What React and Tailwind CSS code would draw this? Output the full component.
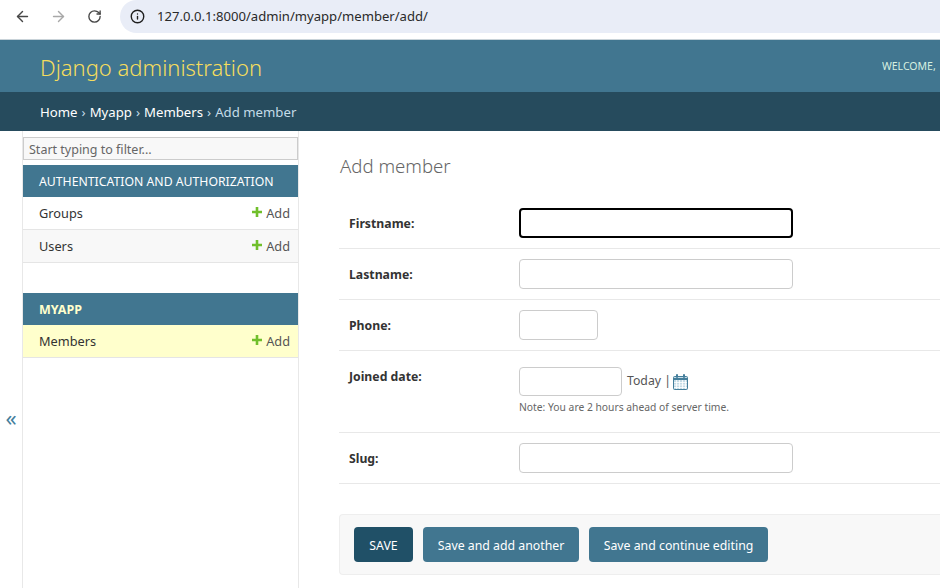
import React from "react";
import { ArrowLeft, ArrowRight, RotateCw, Info } from "lucide-react";

const font = "font-['Noto_Sans','Open_Sans',sans-serif]";

function PlusIcon() {
  return (
    <svg width="10" height="10" viewBox="0 0 10 10" className="mr-[4px] mb-[5px]">
      <path d="M3.7 0h2.6v3.7H10v2.6H6.3V10H3.7V6.3H0V3.7h3.7z" fill="#70bf2b" />
    </svg>
  );
}

function CalendarIcon() {
  return (
    <svg width="15" height="16" viewBox="0 0 15 16" fill="none">
      <rect x="0.5" y="2.5" width="14" height="13" rx="1" fill="#c5dbe6" stroke="#447e9b" />
      <path d="M0.5 5h14" stroke="#447e9b" strokeWidth="2" />
      <path d="M3.5 6v9M6.5 6v9M9.5 6v9M12.5 6v9M1 8.5h13M1 11h13M1 13.5h13" stroke="#ffffff" strokeWidth="0.8" />
      <rect x="3" y="0" width="2" height="4" rx="1" fill="#447e9b" />
      <rect x="10" y="0" width="2" height="4" rx="1" fill="#447e9b" />
    </svg>
  );
}

function SidebarRow({ name, shade }) {
  return (
    <div className={`flex h-[33px] items-center justify-between border-b border-[#e5e5e5] pt-[2px] pl-[16px] pr-[8px] text-[12.75px] text-[#333333] ${shade}`}>
      <span>{name}</span>
      <span className="flex items-center text-[#555555]">
        <PlusIcon />
        Add
      </span>
    </div>
  );
}

function FormRow({ label, children, height, inputTop = "pt-[10px]" }) {
  return (
    <div className={`flex border-b border-[#e8e8e8] pl-[10px] ${height}`}>
      <label className="w-[170px] pt-[17px] text-[12.25px] leading-[18px] font-bold text-[#333333]">{label}</label>
      <div className={inputTop}>{children}</div>
    </div>
  );
}

function TextBox({ width, height = "h-[30px]", focused }) {
  return (
    <input
      type="text"
      className={`block rounded-[4px] bg-white ${height} ${width} ${
        focused ? "border-2 border-black" : "border border-[#cccccc]"
      }`}
    />
  );
}

export default function App() {
  return (
    <div className={`flex h-[588px] w-[940px] flex-col overflow-hidden bg-white ${font}`}>
      {/* browser toolbar */}
      <div className="flex h-[40px] shrink-0 items-start border-b border-[#c9d3d9] bg-white">
        <div className="flex h-[33px] w-[120px] shrink-0 items-center pl-[14px]">
          <ArrowLeft size={17} strokeWidth={2} className="text-[#474747]" />
          <ArrowRight size={17} strokeWidth={2} className="ml-[19px] text-[#a8a8a8]" />
          <RotateCw size={15} strokeWidth={2.2} className="ml-[20px] text-[#474747]" />
        </div>
        <div className="flex h-[33px] flex-1 items-center rounded-l-full bg-[#e9edf7] pl-[10px]">
          <Info size={15} strokeWidth={2.2} className="text-[#1f1f1f]" />
          <span className="ml-[12px] text-[13.1px] text-[#2a2a2a]">127.0.0.1:8000/admin/myapp/member/add/</span>
        </div>
      </div>

      {/* django header */}
      <div className="flex h-[52px] shrink-0 items-center justify-between bg-[#417690] pt-[2px] pl-[40px]">
        <span className="text-[22px] font-light text-[#f5dd5d]">Django administration</span>
        <span className="w-[58px] overflow-hidden text-[10.5px] whitespace-nowrap text-[#d6f0e0]">WELCOME,</span>
      </div>
      <div className="flex h-[39px] shrink-0 items-center bg-[#264b5d] pt-[2px] pl-[40px] text-[13.2px] text-[#c4dce8]">
        <span className="text-white">Home</span>
        <span className="mx-[4px]">›</span>
        <span className="text-white">Myapp</span>
        <span className="mx-[4px]">›</span>
        <span className="text-white">Members</span>
        <span className="mx-[4px]">›</span>
        <span>Add member</span>
      </div>

      <div className="flex min-h-0 flex-1">
        {/* collapse toggle */}
        <div className="flex w-[23px] shrink-0 items-center justify-center border-r border-[#e8e8e8] pt-[116px] text-[22px] text-[#447e9b]">
          «
        </div>

        {/* sidebar */}
        <div className="w-[276px] shrink-0 border-r border-[#e8e8e8]">
          <div className="mt-[6px] mb-[5px] flex h-[23px] items-center border border-[#cccccc] bg-[#f8f8f8] pt-[3px] pl-[5px] text-[12.5px] text-[#666666]">
            Start typing to filter...
          </div>
          <div className="flex h-[32px] items-center bg-[#417690] pt-[2px] pl-[16px] text-[12.25px] text-white">
            AUTHENTICATION AND AUTHORIZATION
          </div>
          <SidebarRow name="Groups" shade="bg-white" />
          <SidebarRow name="Users" shade="bg-[#f8f8f8]" />
          <div className="mt-[30px] flex h-[32px] items-center bg-[#417690] pt-[2px] pl-[16px] text-[12.5px] font-bold text-[#ffffcc]">
            MYAPP
          </div>
          <SidebarRow name="Members" shade="bg-[#ffffcc]" />
        </div>

        {/* content */}
        <div className="min-w-0 flex-1 pl-[40px]">
          <h1 className="mt-[22px] mb-[19px] ml-[1px] text-[18.6px] leading-[26px] font-light text-[#666666]">Add member</h1>
          <FormRow label="Firstname:" height="h-[51px]">
            <TextBox width="w-[274px]" focused />
          </FormRow>
          <FormRow label="Lastname:" height="h-[51px]">
            <TextBox width="w-[274px]" />
          </FormRow>
          <FormRow label="Phone:" height="h-[51px]">
            <TextBox width="w-[79px]" />
          </FormRow>
          <FormRow label="Joined date:" height="h-[82px]" inputTop="pt-[16px]">
            <div className="flex items-center text-[12.25px] text-[#555555]">
              <TextBox width="w-[103px]" height="h-[29px]" />
              <span className="ml-[5px]">Today |</span>
              <span className="ml-[2px]">
                <CalendarIcon />
              </span>
            </div>
            <p className="mt-[3px] text-[10.3px] leading-[16px] text-[#666666]">Note: You are 2 hours ahead of server time.</p>
          </FormRow>
          <FormRow label="Slug:" height="h-[51px]">
            <TextBox width="w-[274px]" />
          </FormRow>
          <div className="mt-[30px] flex h-[61px] items-center gap-[10px] rounded-l-[4px] border border-r-0 border-[#eeeeee] bg-[#f8f8f8] pl-[14px] text-[12.3px] text-white">
            <button className="h-[35px] w-[59px] rounded-[4px] bg-[#205067] pt-[3px]">SAVE</button>
            <button className="h-[35px] w-[156px] rounded-[4px] bg-[#417690] pt-[3px]">Save and add another</button>
            <button className="h-[35px] w-[179px] rounded-[4px] bg-[#417690] pt-[3px]">Save and continue editing</button>
          </div>
        </div>
      </div>
    </div>
  );
}
